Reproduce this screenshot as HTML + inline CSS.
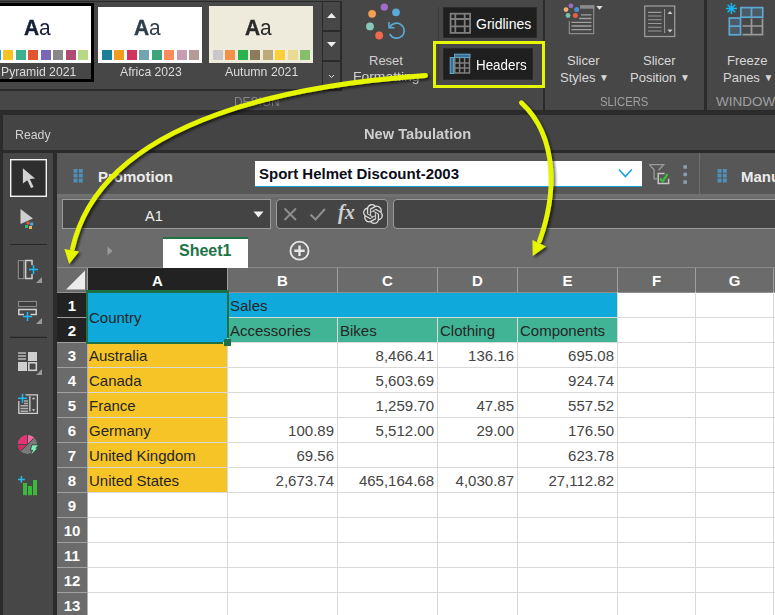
<!DOCTYPE html>
<html><head><meta charset="utf-8">
<style>
*{margin:0;padding:0;box-sizing:border-box}
html,body{width:775px;height:615px;overflow:hidden;background:#2b2b2b;font-family:"Liberation Sans",sans-serif}
.a{position:absolute}
.t{position:absolute;white-space:nowrap;line-height:1}
.sw{position:absolute;width:10px;height:10px;top:50px}
</style></head><body>
<!-- RIBBON -->
<div class="a" style="left:0;top:0;width:775px;height:110px;background:#474747"></div>
<!-- gallery border -->
<div class="a" style="left:-3px;top:1px;width:345px;height:90px;border:2px solid #2a2a2a;border-top-width:1px"></div>
<!-- theme 1 selected -->
<div class="a" style="left:-3px;top:3px;width:97px;height:79px;border:3px solid #000;background:#474747"></div>
<div class="a" style="left:0;top:6px;width:91px;height:57px;background:#fff"></div>
<div class="t" style="left:24px;top:17px;font-size:22px;color:#152036;transform:scaleX(0.95);transform-origin:0 0"><b style="-webkit-text-stroke:0.4px">A</b>a</div>
<div class="sw" style="left:-9px;background:#1ba1e2"></div>
<div class="sw" style="left:3px;background:#f6c324"></div>
<div class="sw" style="left:16px;background:#3cb08f"></div>
<div class="sw" style="left:28px;background:#e0542e"></div>
<div class="sw" style="left:41px;background:#7b68b5"></div>
<div class="sw" style="left:53px;background:#888888"></div>
<div class="sw" style="left:66px;background:#b04a72"></div>
<div class="sw" style="left:78px;background:#b7d884"></div>
<div class="t" style="left:1px;top:65px;font-size:13px;color:#dcdcdc;transform:scaleX(0.938);transform-origin:0 0">Pyramid 2021</div>
<!-- theme 2 -->
<div class="a" style="left:98px;top:7px;width:104px;height:56px;background:#fff"></div>
<div class="t" style="left:134px;top:17px;font-size:22px;color:#2d3e48;transform:scaleX(0.95);transform-origin:0 0"><b style="-webkit-text-stroke:0.4px">A</b>a</div>
<div class="sw" style="left:102px;background:#1a7f99"></div>
<div class="sw" style="left:114px;background:#f29b1d"></div>
<div class="sw" style="left:127px;background:#d2325c"></div>
<div class="sw" style="left:139px;background:#73a4b2"></div>
<div class="sw" style="left:152px;background:#3da57c"></div>
<div class="sw" style="left:164px;background:#fc8c58"></div>
<div class="sw" style="left:177px;background:#c89db0"></div>
<div class="sw" style="left:189px;background:#b39c98"></div>
<div class="t" style="left:120px;top:65px;font-size:13px;color:#dcdcdc;transform:scaleX(0.938);transform-origin:0 0">Africa 2023</div>
<!-- theme 3 -->
<div class="a" style="left:209px;top:6px;width:104px;height:57px;background:#eeeadc"></div>
<div class="t" style="left:245px;top:17px;font-size:22px;color:#2a2a2a;transform:scaleX(0.95);transform-origin:0 0"><b style="-webkit-text-stroke:0.4px">A</b>a</div>
<div class="sw" style="left:213px;background:#c8c8c8"></div>
<div class="sw" style="left:225px;background:#f2924a"></div>
<div class="sw" style="left:238px;background:#2bb34f"></div>
<div class="sw" style="left:250px;background:#8c7b58"></div>
<div class="sw" style="left:263px;background:#baab78"></div>
<div class="sw" style="left:275px;background:#fccf39"></div>
<div class="sw" style="left:288px;background:#eadb94"></div>
<div class="sw" style="left:300px;background:#88bd6c"></div>
<div class="t" style="left:225px;top:65px;font-size:13px;color:#dcdcdc;transform:scaleX(0.948);transform-origin:0 0">Autumn 2021</div>
<!-- scroll column -->
<div class="a" style="left:322px;top:1px;width:20px;height:90px;border-left:1px solid #2a2a2a;border-right:2px solid #2a2a2a"></div>
<div class="a" style="left:323px;top:30px;width:17px;height:2px;background:#2a2a2a"></div>
<div class="a" style="left:323px;top:60px;width:17px;height:2px;background:#2a2a2a"></div>
<svg class="a" style="left:322px;top:0" width="20" height="90"><path d="M5 18 L9.5 13 L14 18Z" fill="#eee"/><path d="M5 42 L9.5 47 L14 42Z" fill="#eee"/><path d="M7 75 L9.5 77.5 L12 75" stroke="#ddd" stroke-width="1" fill="none"/></svg>
<div class="t" style="left:234px;top:95px;font-size:13.5px;color:#868686;transform:scaleX(0.88);transform-origin:0 0">DESIGN</div>

<!-- Reset formatting -->
<svg class="a" style="left:360px;top:0" width="50" height="45">
<circle cx="24.3" cy="7.1" r="3.7" fill="#a06cc8"/>
<circle cx="36" cy="12.4" r="3.8" fill="#5aaad8"/>
<circle cx="12.1" cy="13.8" r="3.9" fill="#f0a050"/>
<circle cx="10" cy="26.4" r="3.9" fill="#88c8b8"/>
<circle cx="19.2" cy="35.5" r="3.9" fill="#f06a4a"/>
<path d="M29.8 27.5 A7.5 7.5 0 1 1 29.8 33.8" stroke="#5aaad8" stroke-width="1.6" fill="none"/>
<path d="M29 22 L29 27.7 L34.5 27.7" stroke="#5aaad8" stroke-width="1.6" fill="none"/>
</svg>
<div class="t" style="left:369px;top:54px;font-size:13px;color:#d0d0d0">Reset</div>
<div class="t" style="left:353px;top:70px;font-size:13px;color:#d0d0d0;transform:scaleX(1.07);transform-origin:0 0">Formatting</div>

<div class="a" style="left:438px;top:7px;width:1px;height:74px;background:#3a3a3a"></div>
<!-- Gridlines -->
<div class="a" style="left:443px;top:7px;width:94px;height:31px;background:#1f1f1f;border:1px solid #2a2a2a"></div>
<svg class="a" style="left:449px;top:12px" width="22" height="22"><rect x="1.6" y="1.7" width="19.5" height="19.2" fill="none" stroke="#7e7e7e" stroke-width="1.8"/><path d="M6.3 1.7V21M15.7 1.7V21M1.6 7H21M1.6 14.4H21" stroke="#7e7e7e" stroke-width="1.8"/></svg>
<div class="t" style="left:476px;top:17px;font-size:14px;color:#fff">Gridlines</div>
<!-- Headers -->
<div class="a" style="left:443px;top:48px;width:90px;height:32px;background:#1f1f1f;border:1px solid #2a2a2a"></div>
<svg class="a" style="left:449px;top:53px" width="22" height="22"><rect x="1.2" y="4.6" width="3.4" height="15.9" fill="#3f6f8c" stroke="#64a8d0" stroke-width="1"/><rect x="5.5" y="1.2" width="15.5" height="3.4" fill="#3f6f8c" stroke="#64a8d0" stroke-width="1"/><path d="M5.8 5V20.6M10.6 5V20.6M15.6 5V20.6M20.5 5V20.6M5.5 10H21M5.5 15H21M5.5 20H21" stroke="#808080" stroke-width="1.5"/></svg>
<div class="t" style="left:476px;top:58px;font-size:14px;color:#fff;transform:scaleX(0.956);transform-origin:0 0">Headers</div>


<div class="a" style="left:543px;top:0;width:2px;height:110px;background:#2b2b2b"></div>
<!-- Slicer styles -->
<svg class="a" style="left:560px;top:0" width="50" height="40">
<path d="M20 5.9H33.7V33.7H9.3V21" fill="none" stroke="#8a8a8a" stroke-width="1.2"/>
<rect x="20" y="5.3" width="14.3" height="3.4" fill="#8a8a8a"/>
<path d="M21 14.8H31.5M19 18.5H31.5M11.5 22.4H31.5M11.5 26H31.5M11.5 29.7H31.5" stroke="#a0a0a0" stroke-width="1.3"/>
<circle cx="10.9" cy="5.8" r="2.4" fill="#a06cc8"/>
<circle cx="16.7" cy="9.6" r="2.5" fill="#4a90d0"/>
<circle cx="6" cy="9.6" r="2.4" fill="#f0b070"/>
<circle cx="8" cy="15.5" r="2.4" fill="#78c0a8"/>
<circle cx="15.4" cy="15.5" r="2.5" fill="#e86040"/>
<path d="M36.3 6 L39.5 9.8 L42.7 6Z" fill="#ddd"/>
</svg>
<div class="t" style="left:567px;top:54px;font-size:13px;color:#d8d8d8">Slicer</div>
<div class="t" style="left:560px;top:71px;font-size:13px;color:#d8d8d8">Styles <span style="font-size:10px;vertical-align:1px">&#9660;</span></div>
<!-- Slicer position -->
<svg class="a" style="left:640px;top:0" width="40" height="40">
<rect x="4.7" y="6" width="30" height="30.5" fill="none" stroke="#9a9a9a" stroke-width="1.3"/>
<path d="M8 12.4H21.5M8 16H21.5M8 19.8H21.5M8 23.5H21.5M8 27.3H21.5M8 31H21.5" stroke="#9a9a9a" stroke-width="1.1"/>
<path d="M24.6 9V33" stroke="#9a9a9a" stroke-width="1"/>
<path d="M27.5 14 L30 11 L32.5 14Z M27.5 29.5 L30 32.5 L32.5 29.5Z" fill="#ccc"/>
</svg>
<div class="t" style="left:643px;top:54px;font-size:13px;color:#d8d8d8">Slicer</div>
<div class="t" style="left:630px;top:71px;font-size:13px;color:#d8d8d8">Position <span style="font-size:10px;vertical-align:1px">&#9660;</span></div>
<div class="t" style="left:600px;top:95px;font-size:13.5px;color:#a0a0a0;transform:scaleX(0.838);transform-origin:0 0">SLICERS</div>
<div class="a" style="left:704px;top:0;width:3px;height:111px;background:#2b2b2b"></div>
<!-- Freeze panes -->
<svg class="a" style="left:720px;top:0" width="55" height="40">
<path d="M11.4 3V14M5.9 8.5H16.9M7.6 4.7L15.2 12.3M15.2 4.7L7.6 12.3" stroke="#12b8f2" stroke-width="1.5"/>
<rect x="20.9" y="7.6" width="21.8" height="9.6" fill="#4b5a66" stroke="#5ea9d2" stroke-width="1.7"/>
<path d="M31.5 7.6V17.2" stroke="#5ea9d2" stroke-width="1.7"/>
<rect x="9.3" y="18" width="11.2" height="16.8" fill="#4b5a66" stroke="#5ea9d2" stroke-width="1.7"/>
<path d="M9.3 26.2H20.5" stroke="#5ea9d2" stroke-width="1.7"/>
<path d="M22.5 34.6H43.2M42.5 18.5V35.3M31.5 18.5V35M22.5 26H43" stroke="#9a9a9a" stroke-width="1.7"/>
</svg>
<div class="t" style="left:727px;top:54px;font-size:13px;color:#d8d8d8">Freeze</div>
<div class="t" style="left:723px;top:71px;font-size:13px;color:#d8d8d8">Panes <span style="font-size:10px;vertical-align:1px">&#9660;</span></div>
<div class="t" style="left:716px;top:95px;font-size:13.5px;color:#a0a0a0">WINDOW</div>

<!-- TITLE BAR -->
<div class="a" style="left:3px;top:114.5px;width:772px;height:35px;background:#444"></div>
<div class="t" style="left:15px;top:128px;font-size:13px;color:#d0d0d0;transform:scaleX(0.946);transform-origin:0 0">Ready</div>
<div class="t" style="left:364px;top:126px;font-size:15px;font-weight:bold;color:#cfcfcf;transform:scaleX(0.976);transform-origin:0 0">New Tabulation</div>

<!-- LEFT TOOLBAR -->
<div class="a" style="left:3px;top:152.5px;width:50px;height:463px;background:#474747"></div>
<svg class="a" style="left:10px;top:159px" width="37" height="38"><rect x="0.7" y="0.7" width="35.6" height="36.6" fill="#2e2e2e" stroke="#f4f4f4" stroke-width="1.4"/></svg>
<svg class="a" style="left:0;top:150px" width="57" height="350">
<path d="M22.9 18.2 L35 28.6 L29.8 28.9 L33.6 36.9 L31 38 L27.3 30.2 L22.9 33.5Z" fill="#d2d2d2"/>
<path d="M20.5 59 L33 68.5 L20.5 74Z" fill="#cfcfcf"/>
<rect x="26.5" y="71.5" width="3" height="3" fill="#e05a3a"/>
<rect x="30.2" y="72.5" width="3" height="3" fill="#3ab0f0"/>
<rect x="25" y="75" width="3" height="3" fill="#20c080"/>
<rect x="29" y="76" width="3" height="3" fill="#f0b060"/>
<path d="M10 94.5H47" stroke="#262626" stroke-width="1.2"/>
<!-- insert column -->
<rect x="18.4" y="110.6" width="5.4" height="18" fill="#3e3e3e" stroke="#8a8a8a" stroke-width="1.1"/>
<path d="M32 115V110.6H25.6V128.6H32V124" fill="none" stroke="#d0d0d0" stroke-width="1.5"/>
<path d="M29 119.4H38M33.5 114.9V124" stroke="#1ebaf5" stroke-width="1.5"/>
<path d="M42 127 L42 133 L36 133Z" fill="#9a9a9a"/>
<!-- insert row -->
<rect x="18.5" y="151.5" width="18" height="5" fill="#3e3e3e" stroke="#8a8a8a" stroke-width="1.1"/>
<path d="M24 164.4H18.8V159.4H36.2V164.4H30.5" fill="none" stroke="#d0d0d0" stroke-width="1.5"/>
<path d="M22.9 166.5H32.1M27.5 161.9V171.1" stroke="#1ebaf5" stroke-width="1.5"/>
<path d="M42 168 L42 174 L36 174Z" fill="#9a9a9a"/>
<path d="M10 187.3H47" stroke="#262626" stroke-width="1.2"/>
<!-- layout -->
<path d="M18 203H26M18 206H26M18 209H26" stroke="#bbb" stroke-width="1.6"/>
<rect x="28" y="202" width="9" height="9" fill="#cfcfcf"/>
<rect x="18" y="212" width="9" height="9" fill="#cfcfcf"/>
<rect x="28.8" y="212.8" width="7.5" height="7.5" fill="none" stroke="#cfcfcf" stroke-width="1.6"/>
<path d="M42 219 L42 225 L36 225Z" fill="#9a9a9a"/>
<!-- slicer insert -->
<path d="M18.8 251V263.4H37.4V244.8H25.5" fill="none" stroke="#d0d0d0" stroke-width="1.3"/>
<path d="M24 251H28M24 253.5H28M20.5 255.8H28M20.5 258.5H28M20.5 261.2H28" stroke="#b0b0b0" stroke-width="1.5"/>
<path d="M29.8 246V261.5" stroke="#b0b0b0" stroke-width="1.8"/>
<path d="M31.8 249.2L33.6 247.2L35.4 249.2Z M31.8 259.2L33.6 261.2L35.4 259.2Z" fill="#d0d0d0"/>
<path d="M18 248.3H27M22.5 243.8V252.8" stroke="#1ebaf5" stroke-width="1.5"/>
<!-- pie -->
<circle cx="27.5" cy="294.5" r="9.6" fill="#7a7a7a"/>
<path d="M27.5 294.5 L34.3 287.7 A9.6 9.6 0 0 0 27.5 284.9Z" fill="#f06aa0"/>
<path d="M27.5 294.5 L27.5 284.9 A9.6 9.6 0 0 0 17.9 294.5Z" fill="#e83272"/>
<path d="M27.5 294.5 L17.9 294.5 A9.6 9.6 0 0 0 20.7 301.3Z" fill="#d42a64"/>
<path d="M17.5 294.5H27.5V284.5M20.7 301.3L34.3 287.7" stroke="#474747" stroke-width="1" fill="none"/>
<path d="M32.3 295.2 L37.9 295.2 L35.3 298.6 L36.9 298.6 L31.2 304.5 L33.2 300 L30.9 299.8Z" fill="#78f0b8" stroke="#474747" stroke-width="2" stroke-linejoin="round" paint-order="stroke"/>
<!-- chart -->
<path d="M18 329.4H24.8M21.4 326V332.8" stroke="#2ab8f0" stroke-width="1.5"/>
<rect x="23" y="333" width="4" height="12.2" fill="#3cb93c"/>
<rect x="28" y="336" width="4" height="9.2" fill="#3cb93c"/>
<rect x="33" y="330" width="4" height="15.2" fill="#3cb93c"/>
</svg>
<div class="a" style="left:53px;top:152.5px;width:4px;height:463px;background:#2b2b2b"></div>

<!-- MAIN PANEL -->
<div class="a" style="left:57px;top:152.5px;width:718px;height:41.5px;background:#575757"></div>
<div class="a" style="left:57px;top:194px;width:718px;height:35px;background:#6b6b6b"></div><div class="a" style="left:57px;top:194px;width:718px;height:3px;background:#717171"></div>
<svg class="a" style="left:73px;top:168px" width="12" height="16"><path d="M0.5 1h4v3.8h-4zM5.8 1h4v3.8h-4zM0.5 5.8h4v3.8h-4zM5.8 5.8h4v3.8h-4zM0.5 10.6h4v3.8h-4zM5.8 10.6h4v3.8h-4z" fill="#4f8fba"/></svg>
<div class="t" style="left:98px;top:169px;font-size:15px;font-weight:bold;color:#ececec">Promotion</div>
<div class="a" style="left:255px;top:161px;width:387px;height:26px;background:#fff;border-bottom:1.5px solid #14a0d8"></div>
<div class="t" style="left:259px;top:166px;font-size:15px;font-weight:bold;color:#0d0d1a">Sport Helmet Discount-2003</div>
<svg class="a" style="left:617px;top:167px" width="18" height="12"><path d="M2 2.5 L8.4 9.5 L14.8 2.5" stroke="#1aa0e0" stroke-width="1.6" fill="none"/></svg>
<svg class="a" style="left:647px;top:162px" width="26" height="24">
<path d="M2.3 2.6H16.7L11.6 8.2M2.3 2.6L7.1 7.8V16.8H10" fill="none" stroke="#9a9a9a" stroke-width="1.3"/>
<path d="M17.6 11.6H11.2V21.5H21.6V16.8" fill="none" stroke="#c4c4c4" stroke-width="1.5"/>
<path d="M13 16.6L15.8 19.2L20.5 12.2" stroke="#3cc03c" stroke-width="2.2" fill="none"/>
</svg>
<svg class="a" style="left:682px;top:164px" width="6" height="22"><rect x="1.4" y="1.2" width="3.5" height="3.5" fill="#8aa0b0"/><rect x="1.4" y="8.7" width="3.5" height="3.5" fill="#8aa0b0"/><rect x="1.4" y="16.3" width="3.5" height="3.5" fill="#8aa0b0"/></svg>
<div class="a" style="left:699px;top:153px;width:1px;height:41px;background:#6e6e6e"></div>
<svg class="a" style="left:717px;top:168px" width="12" height="16"><path d="M0.5 1h4v3.8h-4zM5.8 1h4v3.8h-4zM0.5 5.8h4v3.8h-4zM5.8 5.8h4v3.8h-4zM0.5 10.6h4v3.8h-4zM5.8 10.6h4v3.8h-4z" fill="#4f8fba"/></svg>
<div class="t" style="left:741px;top:169px;font-size:15px;font-weight:bold;color:#ececec">Manual</div>

<!-- formula row -->
<div class="a" style="left:62px;top:199px;width:209px;height:30px;background:#444;border:1px solid #9a9a9a"></div>
<div class="t" style="left:145px;top:209px;font-size:14.5px;color:#f0f0f0">A1</div>
<svg class="a" style="left:252px;top:209px" width="14" height="12"><path d="M1.5 2.5H11.5L6.5 8.5Z" fill="#f0f0f0"/></svg>
<div class="a" style="left:276px;top:199px;width:111.5px;height:30px;background:#444;border:1px solid #9a9a9a;border-radius:4px"></div>
<svg class="a" style="left:276px;top:199px" width="112" height="30">
<path d="M8.5 9.5L20 21M20 9.5L8.5 21" stroke="#8e8e8e" stroke-width="2"/>
<path d="M34.5 15.5L39.5 20.5L49 10" stroke="#8e8e8e" stroke-width="2" fill="none"/>
</svg>
<div class="t" style="left:338px;top:202px;font-size:20px;font-style:italic;font-weight:bold;font-family:'Liberation Serif',serif;color:#d0d0d0">fx</div>
<svg class="a" style="left:363px;top:204px" width="20" height="20" viewBox="0 0 24 24"><path fill="#dcdcdc" d="M22.28 9.82a5.98 5.98 0 0 0-.52-4.91 6.05 6.05 0 0 0-6.51-2.9A6.07 6.07 0 0 0 4.98 4.18a5.98 5.98 0 0 0-4 2.9 6.05 6.05 0 0 0 .74 7.1 5.98 5.98 0 0 0 .51 4.91 6.05 6.05 0 0 0 6.51 2.9A5.98 5.98 0 0 0 13.26 24a6.06 6.06 0 0 0 5.77-4.21 5.99 5.99 0 0 0 4-2.9 6.06 6.06 0 0 0-.75-7.07zm-9.02 12.61a4.48 4.48 0 0 1-2.88-1.04l.14-.08 4.78-2.76a.8.8 0 0 0 .39-.68v-6.74l2.02 1.17a.07.07 0 0 1 .04.05v5.58a4.5 4.5 0 0 1-4.49 4.5zm-9.66-4.13a4.47 4.47 0 0 1-.53-3.01l.14.08 4.78 2.76a.77.77 0 0 0 .78 0l5.84-3.37v2.33a.08.08 0 0 1-.03.06l-4.84 2.79a4.5 4.5 0 0 1-6.14-1.64zM2.34 7.9a4.49 4.49 0 0 1 2.37-1.97v5.68a.77.77 0 0 0 .39.68l5.81 3.35-2.02 1.17a.08.08 0 0 1-.07 0l-4.83-2.79A4.5 4.5 0 0 1 2.34 7.87zm16.6 3.86-5.84-3.39 2.02-1.16a.08.08 0 0 1 .07 0l4.83 2.79a4.49 4.49 0 0 1-.68 8.1v-5.68a.79.79 0 0 0-.4-.66zm2.01-3.02-.14-.09-4.77-2.78a.78.78 0 0 0-.79 0L9.41 9.23V6.9a.07.07 0 0 1 .03-.06l4.83-2.79a4.5 4.5 0 0 1 6.68 4.66zM8.31 12.86 6.29 11.7a.08.08 0 0 1-.04-.06V6.08a4.5 4.5 0 0 1 7.38-3.45l-.14.08-4.78 2.76a.8.8 0 0 0-.39.68zm1.1-2.37 2.6-1.5 2.61 1.5v3l-2.6 1.5-2.61-1.5z"/></svg>
<div class="a" style="left:393px;top:199px;width:400px;height:30px;background:#444;border:1px solid #9a9a9a;border-radius:4px"></div>

<!-- sheet row -->
<div class="a" style="left:57px;top:229px;width:718px;height:39px;background:#6b6b6b"></div>

<svg class="a" style="left:104px;top:244px" width="12" height="14"><path d="M3.5 2.5L8.5 7L3.5 11.5Z" fill="#9a9a9a"/></svg>
<div class="a" style="left:162.5px;top:237px;width:85.5px;height:31px;background:#fff;border-top:2px solid #217346"></div>
<div class="t" style="left:179px;top:243px;font-size:16px;font-weight:bold;color:#217346">Sheet1</div>
<svg class="a" style="left:288px;top:240px" width="24" height="22"><circle cx="11.5" cy="10.7" r="9" fill="none" stroke="#e8e8e8" stroke-width="1.8"/><path d="M6.3 10.7H16.7M11.5 5.5V15.9" stroke="#e8e8e8" stroke-width="2.4"/></svg>

<!-- GRID -->
<style>.hd{font-size:15px;font-weight:bold;color:#fff;text-align:center}.ct{font-size:15px;color:#262626}.nm{color:#454545}</style>
<div class="a" style="left:57px;top:267px;width:105px;height:1px;background:#8a8a8a;"></div>
<div class="a" style="left:248px;top:267px;width:527px;height:1px;background:#8a8a8a;"></div>
<div class="a" style="left:57px;top:268px;width:718px;height:24px;background:#6b6b6b;"></div>
<div class="a" style="left:88px;top:268px;width:139px;height:24px;background:#222222;"></div>
<div class="a" style="left:57px;top:292px;width:30px;height:323px;background:#6b6b6b;"></div>
<div class="a" style="left:57px;top:293px;width:30px;height:49px;background:#222222;"></div>
<div class="a" style="left:88px;top:292px;width:687px;height:323px;background:#ffffff;"></div>
<div class="a" style="left:88px;top:292px;width:139px;height:50px;background:#10a9db;"></div>
<div class="a" style="left:228px;top:292px;width:389px;height:25px;background:#10a9db;"></div>
<div class="a" style="left:228px;top:317px;width:389px;height:25px;background:#41b495;"></div>
<div class="a" style="left:88px;top:342px;width:139px;height:150px;background:#f6c426;"></div>
<div class="a" style="left:228px;top:317px;width:547px;height:1px;background:#d9d9d9;"></div>
<div class="a" style="left:57px;top:317px;width:30px;height:1px;background:#a0a0a0;"></div>
<div class="a" style="left:88px;top:342px;width:687px;height:1px;background:#d9d9d9;"></div>
<div class="a" style="left:57px;top:342px;width:30px;height:1px;background:#a0a0a0;"></div>
<div class="a" style="left:88px;top:367px;width:687px;height:1px;background:#d9d9d9;"></div>
<div class="a" style="left:57px;top:367px;width:30px;height:1px;background:#a0a0a0;"></div>
<div class="a" style="left:88px;top:392px;width:687px;height:1px;background:#d9d9d9;"></div>
<div class="a" style="left:57px;top:392px;width:30px;height:1px;background:#a0a0a0;"></div>
<div class="a" style="left:88px;top:417px;width:687px;height:1px;background:#d9d9d9;"></div>
<div class="a" style="left:57px;top:417px;width:30px;height:1px;background:#a0a0a0;"></div>
<div class="a" style="left:88px;top:442px;width:687px;height:1px;background:#d9d9d9;"></div>
<div class="a" style="left:57px;top:442px;width:30px;height:1px;background:#a0a0a0;"></div>
<div class="a" style="left:88px;top:467px;width:687px;height:1px;background:#d9d9d9;"></div>
<div class="a" style="left:57px;top:467px;width:30px;height:1px;background:#a0a0a0;"></div>
<div class="a" style="left:88px;top:492px;width:687px;height:1px;background:#d9d9d9;"></div>
<div class="a" style="left:57px;top:492px;width:30px;height:1px;background:#a0a0a0;"></div>
<div class="a" style="left:88px;top:517px;width:687px;height:1px;background:#d9d9d9;"></div>
<div class="a" style="left:57px;top:517px;width:30px;height:1px;background:#a0a0a0;"></div>
<div class="a" style="left:88px;top:542px;width:687px;height:1px;background:#d9d9d9;"></div>
<div class="a" style="left:57px;top:542px;width:30px;height:1px;background:#a0a0a0;"></div>
<div class="a" style="left:88px;top:567px;width:687px;height:1px;background:#d9d9d9;"></div>
<div class="a" style="left:57px;top:567px;width:30px;height:1px;background:#a0a0a0;"></div>
<div class="a" style="left:88px;top:592px;width:687px;height:1px;background:#d9d9d9;"></div>
<div class="a" style="left:57px;top:592px;width:30px;height:1px;background:#a0a0a0;"></div>
<div class="a" style="left:57px;top:292px;width:718px;height:1px;background:#8f8f8f;"></div>
<div class="a" style="left:87px;top:268px;width:1px;height:24px;background:#a0a0a0;"></div>
<div class="a" style="left:87px;top:292px;width:1px;height:323px;background:#b0b0b0;"></div>
<div class="a" style="left:227px;top:268px;width:1px;height:24px;background:#a0a0a0;"></div>
<div class="a" style="left:227px;top:292px;width:1px;height:323px;background:#d9d9d9;"></div>
<div class="a" style="left:337px;top:268px;width:1px;height:24px;background:#a0a0a0;"></div>
<div class="a" style="left:337px;top:317px;width:1px;height:298px;background:#d9d9d9;"></div>
<div class="a" style="left:437px;top:268px;width:1px;height:24px;background:#a0a0a0;"></div>
<div class="a" style="left:437px;top:317px;width:1px;height:298px;background:#d9d9d9;"></div>
<div class="a" style="left:517px;top:268px;width:1px;height:24px;background:#a0a0a0;"></div>
<div class="a" style="left:517px;top:317px;width:1px;height:298px;background:#d9d9d9;"></div>
<div class="a" style="left:617px;top:268px;width:1px;height:24px;background:#a0a0a0;"></div>
<div class="a" style="left:617px;top:292px;width:1px;height:323px;background:#d9d9d9;"></div>
<div class="a" style="left:695px;top:268px;width:1px;height:24px;background:#a0a0a0;"></div>
<div class="a" style="left:695px;top:292px;width:1px;height:323px;background:#d9d9d9;"></div>
<div class="a" style="left:773px;top:268px;width:1px;height:24px;background:#a0a0a0;"></div>
<div class="a" style="left:773px;top:292px;width:1px;height:323px;background:#d9d9d9;"></div>
<svg class="a" style="left:57px;top:268px" width="30" height="24"><path d="M9 21.5H28V2.5Z" fill="#ececec"/></svg>
<div class="t hd" style="left:88px;top:273px;width:139px">A</div>
<div class="t hd" style="left:228px;top:273px;width:109px">B</div>
<div class="t hd" style="left:338px;top:273px;width:99px">C</div>
<div class="t hd" style="left:438px;top:273px;width:79px">D</div>
<div class="t hd" style="left:518px;top:273px;width:99px">E</div>
<div class="t hd" style="left:618px;top:273px;width:77px">F</div>
<div class="t hd" style="left:696px;top:273px;width:77px">G</div>
<div class="t hd" style="left:57px;top:298px;width:30px">1</div>
<div class="t hd" style="left:57px;top:323px;width:30px">2</div>
<div class="t hd" style="left:57px;top:348px;width:30px">3</div>
<div class="t hd" style="left:57px;top:373px;width:30px">4</div>
<div class="t hd" style="left:57px;top:398px;width:30px">5</div>
<div class="t hd" style="left:57px;top:423px;width:30px">6</div>
<div class="t hd" style="left:57px;top:448px;width:30px">7</div>
<div class="t hd" style="left:57px;top:473px;width:30px">8</div>
<div class="t hd" style="left:57px;top:498px;width:30px">9</div>
<div class="t hd" style="left:57px;top:523px;width:30px">10</div>
<div class="t hd" style="left:57px;top:548px;width:30px">11</div>
<div class="t hd" style="left:57px;top:573px;width:30px">12</div>
<div class="t hd" style="left:57px;top:598px;width:30px">13</div>
<div class="t ct" style="left:89px;top:310px">Country</div>
<div class="t ct" style="left:230px;top:298px">Sales</div>
<div class="t ct" style="left:230px;top:323px">Accessories</div>
<div class="t ct" style="left:340px;top:323px">Bikes</div>
<div class="t ct" style="left:440px;top:323px">Clothing</div>
<div class="t ct" style="left:520px;top:323px">Components</div>
<div class="t ct" style="left:89px;top:348px">Australia</div>
<div class="t ct nm" style="left:334px;top:348px;width:100px;text-align:right">8,466.41</div>
<div class="t ct nm" style="left:414px;top:348px;width:100px;text-align:right">136.16</div>
<div class="t ct nm" style="left:514px;top:348px;width:100px;text-align:right">695.08</div>
<div class="t ct" style="left:89px;top:373px">Canada</div>
<div class="t ct nm" style="left:334px;top:373px;width:100px;text-align:right">5,603.69</div>
<div class="t ct nm" style="left:514px;top:373px;width:100px;text-align:right">924.74</div>
<div class="t ct" style="left:89px;top:398px">France</div>
<div class="t ct nm" style="left:334px;top:398px;width:100px;text-align:right">1,259.70</div>
<div class="t ct nm" style="left:414px;top:398px;width:100px;text-align:right">47.85</div>
<div class="t ct nm" style="left:514px;top:398px;width:100px;text-align:right">557.52</div>
<div class="t ct" style="left:89px;top:423px">Germany</div>
<div class="t ct nm" style="left:234px;top:423px;width:100px;text-align:right">100.89</div>
<div class="t ct nm" style="left:334px;top:423px;width:100px;text-align:right">5,512.00</div>
<div class="t ct nm" style="left:414px;top:423px;width:100px;text-align:right">29.00</div>
<div class="t ct nm" style="left:514px;top:423px;width:100px;text-align:right">176.50</div>
<div class="t ct" style="left:89px;top:448px">United Kingdom</div>
<div class="t ct nm" style="left:234px;top:448px;width:100px;text-align:right">69.56</div>
<div class="t ct nm" style="left:514px;top:448px;width:100px;text-align:right">623.78</div>
<div class="t ct" style="left:89px;top:473px">United States</div>
<div class="t ct nm" style="left:234px;top:473px;width:100px;text-align:right">2,673.74</div>
<div class="t ct nm" style="left:334px;top:473px;width:100px;text-align:right">465,164.68</div>
<div class="t ct nm" style="left:414px;top:473px;width:100px;text-align:right">4,030.87</div>
<div class="t ct nm" style="left:514px;top:473px;width:100px;text-align:right">27,112.82</div>
<div class="a" style="left:86px;top:290px;width:143px;height:3px;background:#1e7145;"></div>
<div class="a" style="left:86px;top:342px;width:137px;height:2px;background:#1e7145;"></div>
<div class="a" style="left:86px;top:290px;width:2px;height:54px;background:#1e7145;"></div>
<div class="a" style="left:227px;top:290px;width:2px;height:48px;background:#1e7145;"></div>
<div class="a" style="left:224px;top:339px;width:7px;height:7px;background:#1e7145;"></div>
<!-- /GRID -->
<!-- ARROWS -->
<div class="a" style="left:433px;top:41px;width:112px;height:47px;border:3.5px solid #e6f500"></div>
<svg class="a" style="left:0;top:0" width="775" height="615">
<defs><filter id="sh" x="-10%" y="-10%" width="120%" height="120%"><feGaussianBlur in="SourceAlpha" stdDeviation="1.8"/><feOffset dx="1.5" dy="1.5"/><feComponentTransfer><feFuncA type="linear" slope="0.6"/></feComponentTransfer><feMerge><feMergeNode/><feMergeNode in="SourceGraphic"/></feMerge></filter></defs>
<g filter="url(#sh)">
<path d="M425.5 75.5 C310.9 83.6 102.9 112.8 72.5 248.5" stroke="#e6f500" stroke-width="4.8" fill="none" stroke-linecap="round"/>
<path d="M64.4 248.9 L79.1 251.5 L69.2 264.1Z" fill="#e6f500"/>
<path d="M521.4 102.7 C559.1 137.8 555.7 196.3 539.5 241.0" stroke="#e6f500" stroke-width="4.8" fill="none" stroke-linecap="round"/>
<path d="M532.4 240 L546 246.5 L532.7 255.9Z" fill="#e6f500"/>
</g></svg>
<!-- /ARROWS -->
</body></html>
